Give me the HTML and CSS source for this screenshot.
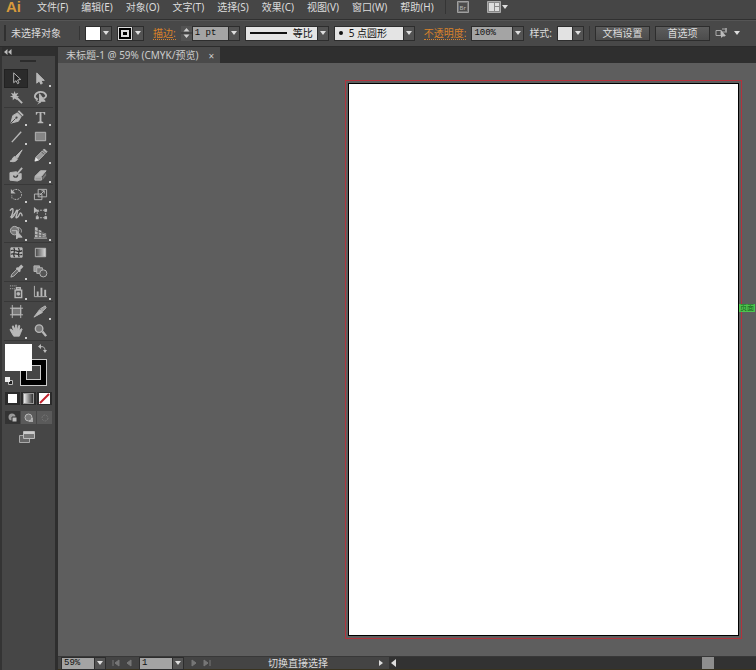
FILE: index.html
```html
<!DOCTYPE html>
<html lang="zh-CN">
<head>
<meta charset="utf-8">
<title>未标题-1</title>
<link rel="stylesheet" href="styles.css">
</head>
<body>
<div class="app">
  <header class="menubar">
    <span class="logo">Ai</span>
    <nav class="menus">
      <button>文件(F)</button><button>编辑(E)</button><button>对象(O)</button><button>文字(T)</button><button>选择(S)</button><button>效果(C)</button><button>视图(V)</button><button>窗口(W)</button><button>帮助(H)</button>
    </nav>
    <span class="rule"></span>
    <button class="bridge" aria-label="Bridge"><svg width="12" height="12" viewBox="0 0 12 12"><path d="M.5 .5h11v11H.5z" fill="#777" stroke="#a0a0a0"/><path d="M2 2h8v8H2z" fill="#4c4c4c"/><text x="2.5" y="8.5" font-size="6" fill="#bbb">Br</text></svg></button>
    <button class="workspace" aria-label="工作区"><svg width="22" height="12" viewBox="0 0 22 12"><path d="M.5 .5h13v11H.5z" fill="#888" stroke="#aaa"/><path d="M2 2h5v8H2zM8 2h4v3H8zM8 6h4v4H8z" fill="#ddd"/><path d="M15 4h6l-3 4z" fill="#ddd"/></svg></button>
  </header>

  <section class="control">
    <span class="grip"></span>
    <span class="state">未选择对象</span>
    <span class="rule"></span>
    <button class="pick" aria-label="填色"><span class="chip"></span><span class="arrow"></span></button>
    <button class="pick" aria-label="描边颜色"><span class="chip ring"></span><span class="arrow"></span></button>
    <label class="link" for="weight">描边:</label>
    <span class="number">
      <button class="stepper" aria-label="调整粗细"><svg width="11" height="14" viewBox="0 0 11 14"><path d="M2.500 5.500h6L5.500 2zM2.500 8.500h6L5.500 12z" fill="#ccc"/><path d="M0 7h11" stroke="#333"/></svg></button>
      <span class="combo weight"><select id="weight"><option>1 pt</option></select><span class="arrow"></span></span>
    </span>
    <button class="pick profile"><span class="face"><i class="line"></i>等比</span><span class="arrow"></span></button>
    <button class="pick brush"><span class="face"><i class="dot"></i>5 点圆形</span><span class="arrow"></span></button>
    <label class="link" for="opacity">不透明度:</label>
    <span class="combo opacity"><select id="opacity"><option>100%</option></select><span class="arrow"></span></span>
    <span class="style">样式:</span>
    <button class="pick" aria-label="样式"><span class="chip pale"></span><span class="arrow"></span></button>
    <span class="rule"></span>
    <button class="command">文档设置</button>
    <button class="command">首选项</button>
    <button class="similar" aria-label="选择类似的对象"><svg width="26" height="12" viewBox="0 0 26 12"><path d="M1 3.500h5v5H1zM7 2h5M7 5h5M7 9h3" fill="none" stroke="#aaa"/><path d="M6 3v8l2-2h3z" fill="#bbb"/><path d="M10 1h2v4h-2z" fill="#999"/><path d="M19 4h6l-3 4z" fill="#ddd"/></svg></button>
  </section>

  <div class="workarea">
    <aside class="tools">
      <button class="collapse" aria-label="折叠"><svg width="8" height="6" viewBox="0 0 8 6"><path d="M3.500 0v6L0 3zM7.500 0v6L4 3z" fill="#bbb"/></svg></button>
      <span class="handle"></span>
      <div class="group">
        <button class="active" aria-label="选择工具"><svg viewBox="0 0 16 16"><path d="M5 2v10.500l2.500-2.200 1.600 3.200 1.600-.8-1.600-3.100L12.500 9z" fill="#222" stroke="#bbb"/></svg></button>
        <button class="more" aria-label="直接选择工具"><svg viewBox="0 0 16 16"><path d="M4 2v11l2.700-2.400L8.300 14l1.700-.9L8.500 10H12z"/></svg></button>
        <button aria-label="魔棒工具"><svg viewBox="0 0 16 16"><path d="M6 1l1 3 3-1-2 3 3 1-3 1 1 3-3-2-2 2V8L1 7l3-1-2-3 3 1z" stroke="none"/><path d="M8 8l6 6" stroke-width="2"/></svg></button>
        <button aria-label="套索工具"><svg viewBox="0 0 16 16"><path d="M5 10C-1 8 3 2 8 2s9 5 3 7" fill="none" stroke-width="2"/><path d="M5 10c-2 0-2 2 0 2s2 2 0 3" fill="none"/><path d="M7 4v10l2-2h4z"/></svg></button>
      </div>
      <div class="group">
        <button class="more" aria-label="钢笔工具"><svg viewBox="0 0 16 16"><path d="M2 14l2-8 5-3 4 4-3 5z"/><path d="M10 1l5 5" stroke-width="2"/><path d="M2 14l5-5" stroke="#444"/><circle cx="8" cy="8" r="1.200" fill="#444" stroke="none"/></svg></button>
        <button class="more" aria-label="文字工具"><svg viewBox="0 0 16 16"><path d="M3 2h10v3h-1l-1-2H9v9l2 1v1H5v-1l2-1V3H5L4 5H3z" stroke="none"/></svg></button>
        <button class="more" aria-label="直线段工具"><svg viewBox="0 0 16 16"><path d="M3 14L13 3" stroke-width="1.500"/></svg></button>
        <button class="more" aria-label="矩形工具"><svg viewBox="0 0 16 16"><path d="M2.500 3.500h11v9h-11z" fill="#858585"/></svg></button>
        <button aria-label="画笔工具"><svg viewBox="0 0 16 16"><path d="M14 2L9 11 7 9z"/><path d="M1 14c3 0 2-4 5-5l3 3c-2 3-5 3-8 2z"/></svg></button>
        <button class="more" aria-label="铅笔工具"><svg viewBox="0 0 16 16"><path d="M2 14l1-4 7-7 3 3-7 7z" fill="#999"/><path d="M11 2l1-1 3 3-1 1z"/><path d="M9 4l3 3" stroke="#555"/><path d="M3 10l3 3-4 1z" stroke="none" fill="#eee"/></svg></button>
        <button aria-label="斑点画笔工具"><svg viewBox="0 0 16 16"><path d="M1 6l7-1v3l5-1v6l-4 2-8-1z"/><path d="M5 9c0 3 5 2 4-1" stroke="#444" stroke-width="1.500" fill="none"/><path d="M8 8l6-7" stroke-width="2"/></svg></button>
        <button class="more" aria-label="橡皮擦工具"><svg viewBox="0 0 16 16"><path d="M2 10l6-6h6l-5 6z"/><path d="M2 11h7v3H2z" fill="#999"/><path d="M10 11l4-5v3l-4 5z" fill="#777" stroke="none"/></svg></button>
      </div>
      <div class="group">
        <button class="more" aria-label="旋转工具"><svg viewBox="0 0 16 16"><path d="M4 4c5-4 11 1 9 6-2 4-7 4-9 2" fill="none" stroke-dasharray="2 1"/><path d="M2 2v5h5z" stroke="none"/><path d="M3 9v3" stroke-dasharray="1 1"/></svg></button>
        <button class="more" aria-label="比例缩放工具"><svg viewBox="0 0 16 16"><path d="M5.500 2.500h9v8h-9zM1.500 7.500h8v6h-8z" fill="none"/><path d="M7 9l5-5M9 4h3v3" fill="none"/></svg></button>
        <button class="more" aria-label="宽度工具"><svg viewBox="0 0 16 16"><path d="M1 5c4-5 4 0 2 5s2 2 4-3 3-2 1 3 2 2 3-1 3-1 3 2" fill="none" stroke-width="1.500"/><path d="M1 12L12 3" /></svg></button>
        <button aria-label="自由变换工具"><svg viewBox="0 0 16 16"><path d="M4.500 4.500h9v8h-9z" fill="none" stroke-dasharray="2 1"/><path d="M1 1v7l2-2h4z" stroke="none"/><path d="M3 11h3v3H3zM12 11h3v3h-3zM12 3h3v3h-3z" stroke="none"/></svg></button>
        <button class="more" aria-label="形状生成器工具"><svg viewBox="0 0 16 16"><circle cx="6" cy="6" r="4.500" fill="#777"/><path d="M8 3c4-1 6 2 5 5M3 6h6" fill="none"/><path d="M8 6v9l2-2h4z"/></svg></button>
        <button class="more" aria-label="透视网格工具"><svg viewBox="0 0 16 16"><path d="M2 2l3 1v10H2zM6 5l3 1v7H6zM10 8l4 1v4h-4z" stroke="none"/><path d="M1 14h14M2 6l12 4M2 10l12 2" stroke="#666"/><path d="M1 14h14"/></svg></button>
      </div>
      <div class="group">
        <button aria-label="网格工具"><svg viewBox="0 0 16 16"><path d="M2 3h12v10H2z"/><path d="M5 3c3 3-2 6 1 10M10 3c3 4-2 6 1 10M2 6c5-2 7 3 12 0M2 10c4-3 8 2 12 0" stroke="#333" stroke-width="1.300" fill="none"/></svg></button>
        <button aria-label="渐变工具"><svg viewBox="0 0 16 16"><defs><linearGradient id="g"><stop stop-color="#444"/><stop offset="1" stop-color="#ddd"/></linearGradient></defs><path d="M2.500 3.500h11v9h-11z" fill="url(#g)"/></svg></button>
        <button class="more" aria-label="吸管工具"><svg viewBox="0 0 16 16"><path d="M2 14l1-3 6-6 2 2-6 6z" fill="#666"/><path d="M8 4l4 4M10 5l3-3 1 1-3 3z" stroke-width="2"/></svg></button>
        <button aria-label="混合工具"><svg viewBox="0 0 16 16"><path d="M1 2h6v6H1z" fill="#999"/><path d="M4 4h6v6H4z" fill="#777"/><circle cx="11" cy="10" r="3.800" fill="#555"/></svg></button>
      </div>
      <div class="group">
        <button class="more" aria-label="符号喷枪工具"><svg viewBox="0 0 16 16"><path d="M6.500 6.500h7v8h-7zM8 4h4v2H8z" fill="#555" stroke-width="1.500"/><circle cx="10" cy="10.500" r="1.500"/><path d="M1 2h7M1 5h5" stroke-dasharray="1 1"/></svg></button>
        <button class="more" aria-label="柱形图工具"><svg viewBox="0 0 16 16"><path d="M1.500 2v11.500H15" fill="none"/><path d="M4 8h2v5H4zM8 4h2v9H8zM12 6h2v7h-2z" stroke="none"/></svg></button>
      </div>
      <div class="group">
        <button aria-label="画板工具"><svg viewBox="0 0 16 16"><path d="M3.500 4.500h9v7h-9z" fill="#777"/><path d="M3.500 1v14M12.500 1v14M1 4.500h14M1 11.500h14" fill="none"/></svg></button>
        <button class="more" aria-label="切片工具"><svg viewBox="0 0 16 16"><path d="M1 14l6-8 3 3z"/><path d="M8 5l5-3 1 2-4 4z" fill="#999"/></svg></button>
        <button class="more" aria-label="抓手工具"><svg viewBox="0 0 16 16"><path d="M5 14L2 9l-1-2 1-.5L5 9 3.500 3.500l1-.5L7 8V2h1.200l.5 6L10.500 2.500l1 .5-.8 5.500L13 6l1 .5-2 5-1 2.500z"/></svg></button>
        <button aria-label="缩放工具"><svg viewBox="0 0 16 16"><circle cx="6.500" cy="6" r="4" fill="#777" stroke-width="1.500"/><path d="M10 9l4 5" stroke-width="2.500"/></svg></button>
      </div>
      <div class="colors">
        <button class="stroke" aria-label="描边"></button>
        <button class="fill" aria-label="填色"></button>
        <button class="swap" aria-label="互换填色和描边"><svg width="9" height="9" viewBox="0 0 9 9"><path d="M2 3c3-1 5 0 5 4" fill="none" stroke="#bbb"/><path d="M0 2.500L3 0v5zM5 6h4L7 9z" fill="#bbb"/></svg></button>
        <button class="reset" aria-label="默认填色和描边"><svg width="9" height="9" viewBox="0 0 9 9"><path d="M3.500 3.500h4v4h-4z" fill="#222" stroke="#bbb"/><path d="M0 0h5v5H0z" fill="#eee"/></svg></button>
      </div>
      <div class="modes">
        <button aria-label="颜色"><span class="swatch"></span></button>
        <button aria-label="渐变"><span class="swatch fade"></span></button>
        <button aria-label="无"><svg width="11" height="11" viewBox="0 0 11 11"><path d="M0 0h11v11H0z" fill="#fff"/><path d="M1 10L10 1" stroke="#c2222c" stroke-width="2"/></svg></button>
      </div>
      <div class="modes drawing">
        <button aria-label="正常绘图"><svg width="10" height="10" viewBox="0 0 10 10"><circle cx="4" cy="4" r="3.500" fill="#999"/><path d="M4 4h5v5H4z" fill="#bbb" stroke="#333"/></svg></button>
        <button aria-label="背面绘图"><svg width="10" height="10" viewBox="0 0 10 10"><path d="M5 5h4v4H5z" fill="#aaa"/><circle cx="4.500" cy="4.500" r="3.500" fill="#777" stroke="#bbb"/></svg></button>
        <button aria-label="内部绘图" disabled><svg width="10" height="10" viewBox="0 0 10 10"><circle cx="5" cy="5" r="3" fill="none" stroke="#737373" stroke-dasharray="2 1"/></svg></button>
      </div>
      <button class="screen" aria-label="更改屏幕模式"><svg width="18" height="14" viewBox="0 0 18 14"><path d="M1.500 5.500h10v7h-10z" fill="#666" stroke="#aaa"/><path d="M5.500 1.500h11v7h-11z" fill="#777" stroke="#bbb"/><path d="M6 2h10v2H6z" fill="#ccc"/></svg></button>
    </aside>

    <main class="document">
      <div class="tabs"><div class="tab"><span>未标题-1 @ 59% (CMYK/预览)</span><button aria-label="关闭">×</button></div></div>
      <div class="canvas">
        <div class="bleed"><div class="artboard"></div><span class="hint">页面</span></div>
      </div>
      <footer class="status">
        <span class="combo zoom"><select aria-label="缩放"><option>59%</option></select><span class="arrow"></span></span>
        <span class="pager">
          <button aria-label="首项"><svg width="8" height="8" viewBox="0 0 8 8"><path d="M1 1v6M7 1v6L3 4z"/></svg></button>
          <button aria-label="上一项"><svg width="8" height="8" viewBox="0 0 8 8"><path d="M6 1v6L2 4z"/></svg></button>
        </span>
        <span class="combo page"><select aria-label="画板"><option>1</option></select><span class="arrow"></span></span>
        <span class="pager">
          <button aria-label="下一项"><svg width="8" height="8" viewBox="0 0 8 8"><path d="M2 1v6l4-3z"/></svg></button>
          <button aria-label="末项"><svg width="8" height="8" viewBox="0 0 8 8"><path d="M7 1v6M1 1v6l4-3z"/></svg></button>
        </span>
        <span class="message">切换直接选择</span>
        <button class="flyout" aria-label="状态菜单"><svg width="8" height="8" viewBox="0 0 8 8"><path d="M2 1v6l4-3z"/></svg></button>
        <div class="scroll">
          <button aria-label="向左滚动"><svg width="8" height="8" viewBox="0 0 8 8"><path d="M6 0v8L1 4z"/></svg></button>
          <span class="thumb"></span>
        </div>
      </footer>
    </main>
  </div>
</div>
</body>
</html>
```
FILE: styles.css
```css
* { box-sizing: border-box; }
body {
  margin: 0;
  background: #474747;
  color: #dcdcdc;
  font: 10px/14px "Noto Sans", "Noto Sans CJK SC", sans-serif;
}
button, select {
  margin: 0;
  padding: 0;
  border: 0;
  border-radius: 0;
  background: none;
  color: inherit;
  font: inherit;
}
svg { display: block; }
.app { display: flex; flex-direction: column; height: 100vh; overflow: hidden; }
.rule { width: 1px; height: 14px; background: #353535; }

.menubar {
  display: flex;
  align-items: center;
  flex: none;
  height: 19px;
  padding: 0 0 5px 6px;
  background: #464646;
}
.logo { width: 31px; color: #d79a3c; font: bold 15px/14px "Liberation Sans", sans-serif; }
.menus { display: flex; gap: 13px; }
.menus button { white-space: nowrap; }
.menubar .rule { margin-left: 11px; }
.bridge { margin-left: 11px; }
.workspace { margin-left: 18px; }

.control {
  display: flex;
  align-items: center;
  flex: none;
  height: 28px;
  padding: 0 4px;
  gap: 5px;
  white-space: nowrap;
  background: #484848;
  border-top: 1px solid #303030;
  border-bottom: 1px solid #2b2b2b;
  box-shadow: inset 0 1px #555;
}
.grip { width: 2px; height: 16px; background: #303030; }
.state { width: 63px; }
.pick {
  display: flex;
  height: 15px;
  border: 1px solid #2d2d2d;
  background: #2d2d2d;
}
.chip { width: 14px; height: 13px; background: #fff; }
.chip.pale { background: #e2e2e2; }
.chip.ring {
  border: 3px solid #000;
  outline: 1px solid #ddd;
  outline-offset: -1px;
  background: #000;
  box-shadow: inset 0 0 0 2px #ddd;
}
.arrow {
  display: flex;
  align-items: center;
  justify-content: center;
  width: 11px;
  height: 13px;
  background: #535353;
  border-left: 1px solid #2d2d2d;
}
.arrow::before {
  content: "";
  border: 3px solid transparent;
  border-top: 4px solid #ddd;
  border-bottom: 0;
}
.link { margin-left: 4px; color: #d9822b; border-bottom: 1px dotted #d9822b; line-height: 12px; }
.number { display: flex; }
.stepper { width: 11px; background: #535353; }
.combo { position: relative; display: flex; height: 15px; border: 1px solid #2d2d2d; }
.combo select {
  width: 100%;
  height: 13px;
  padding: 0 12px 0 2px;
  appearance: none;
  background: #a4a4a4;
  color: #111;
  font: 9px/13px "Liberation Mono", monospace;
}
.combo .arrow { position: absolute; right: 0; top: 0; pointer-events: none; }
.weight { width: 48px; }
.opacity { width: 53px; }
.face {
  display: flex;
  align-items: center;
  gap: 6px;
  width: 71px;
  height: 13px;
  padding: 0 4px;
  line-height: 13px;
  background: #e4e4e4;
  color: #111;
}
.line { width: 38px; height: 2px; background: #111; }
.dot { width: 4px; height: 4px; border-radius: 2px; background: #111; }
.brush .face { width: 68px; }
.command {
  width: 55px;
  height: 15px;
  line-height: 13px;
  background: linear-gradient(#5c5c5c, #4c4c4c);
  border: 1px solid #2d2d2d;
}

.workarea { display: flex; flex: 1; min-height: 0; }
.tools {
  display: flex;
  flex-direction: column;
  flex: none;
  width: 58px;
  background: #464646;
  border-left: 2px solid #343434;
  border-right: 3px solid #2e2e2e;
}
.collapse { display: flex; align-items: center; height: 9px; padding-left: 2px; background: #2f2f2f; }
.handle { width: 16px; height: 2px; margin: 4px 0 7px 18px; background: #2c2c2c; }
.group {
  display: grid;
  grid-template-columns: 24px 24px;
  margin: 0 2px;
  border-bottom: 1px solid #383838;
}
.group button { position: relative; height: 19px; padding: 2px 5px; }
.group svg { width: 15px; height: 15px; fill: #b8b8b8; stroke: #b8b8b8; }
.group .active { background: #2b2b2b; border: 1px solid #222; padding: 1px 4px; }
.more::after {
  content: "";
  position: absolute;
  right: 1px;
  bottom: 1px;
  width: 2px;
  height: 2px;
  background: #ccc;
}
.colors { position: relative; height: 42px; margin: 3px 8px 6px 3px; }
.colors button { position: absolute; }
.fill { left: 0; top: 0; width: 27px; height: 27px; background: #fff; }
.colors .stroke { left: 15px; top: 15px; width: 27px; height: 27px; padding: 0; border: 1px solid #ccc; background: #000; }
.stroke::after {
  content: "";
  position: absolute;
  inset: 5px;
  border: 1px solid #ccc;
  background: #464646;
}
.swap { right: 0; top: 0; }
.reset { left: 0; bottom: 0; }
.modes { display: flex; gap: 1px; margin: 0 3px 6px; }
.modes button {
  display: flex;
  align-items: center;
  justify-content: center;
  width: 15px;
  height: 13px;
  background: #2b2b2b;
}
.swatch { width: 9px; height: 9px; background: #fff; }
.fade { background: linear-gradient(90deg, #eee, #333); outline: 1px solid #999; }
.drawing button { background: #5a5a5a; }
.drawing button:first-child { background: #333; }
.screen { align-self: flex-start; margin-left: 16px; }

.document { display: flex; flex-direction: column; flex: 1; min-width: 0; }
.tabs { display: flex; flex: none; height: 16px; background: #2f2f2f; }
.tab {
  display: flex;
  gap: 10px;
  padding: 1px 6px 0 8px;
  white-space: nowrap;
  background: #4a4a4a;
  color: #ccc;
}
.canvas {
  display: flex;
  justify-content: flex-end;
  flex: 1;
  min-height: 0;
  padding: 17px 14px 17px 0;
  background: #5e5e5e;
}
.bleed {
  position: relative;
  height: 100%;
  aspect-ratio: 397 / 559;
  padding: 2px;
  border: 1px solid #b3323c;
}
.artboard { height: 100%; background: #fff; border: 1px solid #000; }
.hint {
  position: absolute;
  right: -14px;
  top: 40%;
  padding: 0 1px;
  background: #4fc44f;
  color: #14601b;
  font-size: 7px;
  line-height: 8px;
  white-space: nowrap;
}
.status {
  display: flex;
  align-items: center;
  flex: none;
  height: 14px;
  padding-left: 3px;
  background: #444;
  border-top: 1px solid #383838;
  border-bottom: 1px solid #39331f;
}
.status .combo { height: 13px; }
.status .combo select, .status .arrow { height: 11px; line-height: 11px; }
.zoom { width: 45px; }
.page { width: 45px; }
.pager { display: flex; gap: 5px; padding: 0 6px; fill: #777; stroke: #777; }
.message { flex: none; width: 156px; padding-left: 51px; }
.flyout { width: 16px; padding: 0 4px; fill: #ddd; }
.scroll {
  display: flex;
  flex: 1;
  align-items: center;
  justify-content: space-between;
  height: 12px;
  padding: 0 42px 0 1px;
  background: #323232;
  fill: #ddd;
}
.thumb { width: 12px; height: 12px; background: #8e8e8e; }
```
